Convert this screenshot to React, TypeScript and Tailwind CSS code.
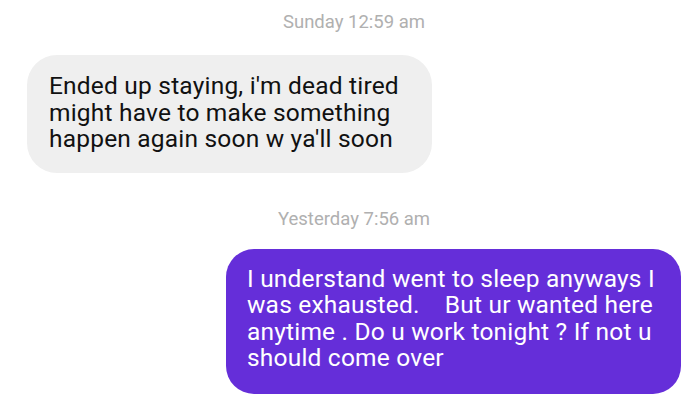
export default function App() {
  return (
    <div className="w-[690px] h-[412px] bg-white overflow-hidden font-['Roboto',sans-serif]">
      <div className="pt-[12px] pl-[18px] text-center text-[18.5px] leading-[20px] text-[#b0b0b0]">
        Sunday 12:59 am
      </div>
      <div className="mt-[23px] ml-[27px] w-[405px] h-[118px] rounded-[30px] bg-[#efefef] pl-[22px] pt-[18px] text-[24.5px] leading-[26.5px] tracking-[0.2px] text-[#111111]">
        Ended up staying, i'm dead tired
        <br />
        might have to make something
        <br />
        happen again soon w ya'll soon
      </div>
      <div className="mt-[36px] pl-[18px] text-center text-[18.5px] leading-[20px] text-[#b0b0b0]">
        Yesterday 7:56 am
      </div>
      <div className="mt-[20px] ml-[226px] w-[455px] h-[145px] rounded-[28px] bg-[#652ed9] pl-[21px] pt-[16.5px] text-[24.5px] leading-[26.5px] tracking-[0.2px] text-white">
        I understand went to sleep anyways I
        <br />
        {"was exhausted.\u00a0\u00a0\u00a0 But ur wanted here"}
        <br />
        anytime . Do u work tonight ? If not u
        <br />
        should come over
      </div>
    </div>
  );
}
